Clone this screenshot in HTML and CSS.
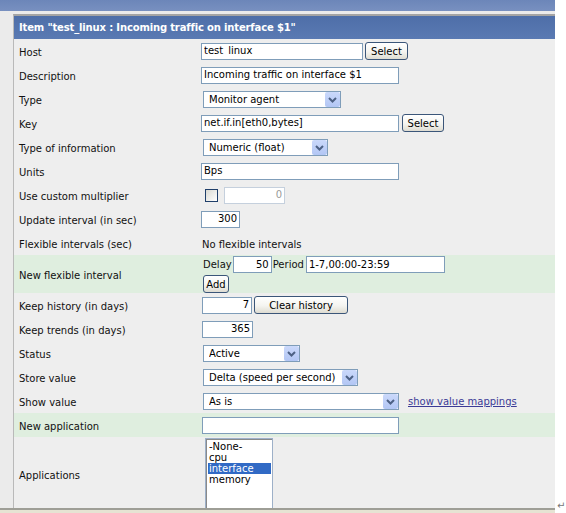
FILE: index.html
```html
<!DOCTYPE html>
<html>
<head>
<meta charset="utf-8">
<link rel="stylesheet" href="styles.css">
</head>
<body>
<div class="shot">
  <div class="page">
    <div class="topbar"></div>
    <div class="main">
      <div class="form">
        <div class="title">Item "test_linux : Incoming traffic on interface $1"</div>

        <div class="row">
          <div class="lbl">Host</div>
          <div class="val"><input class="txt w162" value="test_linux"><button class="btn w43 ml2">Select</button></div>
        </div>
        <div class="row">
          <div class="lbl">Description</div>
          <div class="val"><input class="txt w198" value="Incoming traffic on interface $1"></div>
        </div>
        <div class="row">
          <div class="lbl">Type</div>
          <div class="val"><div class="sel w138"><span class="sel-text">Monitor agent</span><span class="arr"><svg width="15" height="15" viewBox="0 0 15 15"><path d="M4 6 L7.5 9.5 L11 6" fill="none" stroke="#4d6185" stroke-width="2"/></svg></span></div></div>
        </div>
        <div class="row">
          <div class="lbl">Key</div>
          <div class="val"><input class="txt w198" value="net.if.in[eth0,bytes]"><button class="btn w42 ml3">Select</button></div>
        </div>
        <div class="row">
          <div class="lbl">Type of information</div>
          <div class="val"><div class="sel w125"><span class="sel-text">Numeric (float)</span><span class="arr"><svg width="15" height="15" viewBox="0 0 15 15"><path d="M4 6 L7.5 9.5 L11 6" fill="none" stroke="#4d6185" stroke-width="2"/></svg></span></div></div>
        </div>
        <div class="row">
          <div class="lbl">Units</div>
          <div class="val"><input class="txt w198" value="Bps"></div>
        </div>
        <div class="row">
          <div class="lbl">Use custom multiplier</div>
          <div class="val"><span class="chk"></span><input class="txt num dis w61" value="0" disabled></div>
        </div>
        <div class="row">
          <div class="lbl">Update interval (in sec)</div>
          <div class="val"><input class="txt num w39" value="300"></div>
        </div>
        <div class="row">
          <div class="lbl">Flexible intervals (sec)</div>
          <div class="val plain">No flexible intervals</div>
        </div>
        <div class="row green tall">
          <div class="lbl">New flexible interval</div>
          <div class="val flex">
            <div class="line"><span>Delay</span><input class="txt num w39 mx1" value="50"><span>Period</span><input class="txt w139 ml2" value="1-7,00:00-23:59"></div>
            <div class="line"><button class="btn w26">Add</button></div>
          </div>
        </div>
        <div class="row">
          <div class="lbl">Keep history (in days)</div>
          <div class="val"><input class="txt num w50 ml1" value="7"><button class="btn w94 ml2">Clear history</button></div>
        </div>
        <div class="row">
          <div class="lbl">Keep trends (in days)</div>
          <div class="val"><input class="txt num w51 ml1" value="365"></div>
        </div>
        <div class="row">
          <div class="lbl">Status</div>
          <div class="val"><div class="sel w97"><span class="sel-text">Active</span><span class="arr"><svg width="15" height="15" viewBox="0 0 15 15"><path d="M4 6 L7.5 9.5 L11 6" fill="none" stroke="#4d6185" stroke-width="2"/></svg></span></div></div>
        </div>
        <div class="row">
          <div class="lbl">Store value</div>
          <div class="val"><div class="sel w155"><span class="sel-text">Delta (speed per second)</span><span class="arr"><svg width="15" height="15" viewBox="0 0 15 15"><path d="M4 6 L7.5 9.5 L11 6" fill="none" stroke="#4d6185" stroke-width="2"/></svg></span></div></div>
        </div>
        <div class="row">
          <div class="lbl">Show value</div>
          <div class="val"><div class="sel w196"><span class="sel-text">As is</span><span class="arr"><svg width="15" height="15" viewBox="0 0 15 15"><path d="M4 6 L7.5 9.5 L11 6" fill="none" stroke="#4d6185" stroke-width="2"/></svg></span></div><a class="link" href="#">show value mappings</a></div>
        </div>
        <div class="row green">
          <div class="lbl">New application</div>
          <div class="val"><input class="txt w197 ml1" value=""></div>
        </div>
        <div class="row apps">
          <div class="lbl">Applications</div>
          <div class="val top">
            <div class="list">
              <div class="opt">-None-</div>
              <div class="opt">cpu</div>
              <div class="opt on">interface</div>
              <div class="opt">memory</div>
            </div>
          </div>
        </div>
      </div>
    </div>
    <div class="statusbar"></div>
  </div>
  <div class="mark">↵</div>
</div>
</body>
</html>
```

FILE: styles.css
```css
* { box-sizing: border-box; }
html, body { margin: 0; padding: 0; background: #fff; }
body {
  font-family: "DejaVu Sans", Verdana, sans-serif;
  font-size: 10px;
  color: #111;
}
.shot { display: flex; width: 566px; height: 513px; overflow: hidden; }
.page { width: 555px; height: 513px; flex: none; display: flex; flex-direction: column; }
.topbar { height: 11px; flex: none; background: linear-gradient(#6c86b9, #7890c0); }
.main { flex: 1; min-height: 0; overflow: hidden; background: #ebebeb; padding-top: 3px; }
.form {
  margin-left: 13px;
  border-left: 1px solid #b9b9b9;
  border-top: 2px solid #a4a4a4;
  background: #eeeeee;
  min-height: 100%;
}
.title {
  height: 23px;
  line-height: 23px;
  padding-left: 5px;
  background: linear-gradient(#4e6ea8, #5a7ab3);
  color: #fff;
  font-weight: bold;
  letter-spacing: -0.15px;
  white-space: nowrap;
}
.row {
  display: grid;
  grid-template-columns: 187px 1fr;
  align-items: center;
  height: 24px;
}
.row.green { background: #dfeedf; }
.row.tall { height: 38px; }
.row.apps { height: 74px; }
.lbl { padding-left: 5px; padding-top: 2px; white-space: nowrap; }
.val { display: flex; align-items: center; white-space: nowrap; }
.val.plain { padding-left: 1px; padding-top: 2px; }
.val.top { align-self: start; }
.val.flex { flex-direction: column; align-items: flex-start; align-self: start; padding-top: 1px; padding-left: 2px; gap: 2px; }
.line { display: flex; align-items: center; }

.txt {
  height: 17px;
  border: 1px solid #7f9db9;
  background: #fff;
  font: inherit;
  line-height: 14px;
  color: #000;
  padding: 0 2px 1px;
  margin: 0;
  outline: none;
}
.txt.num { text-align: right; }
.txt.dis { border-color: #c5d0dd; color: #9a9a9a; background: #fff; }

.btn {
  height: 18px;
  margin: 0;
  padding: 0;
  font: inherit;
  color: #000;
  border: 1px solid #3b5679;
  border-radius: 3px;
  background: linear-gradient(#ffffff 0%, #f4f4f0 55%, #dedcd2 100%);
}

.sel {
  height: 17px;
  margin-left: 2px;
  border: 1px solid #7f9db9;
  background: #fff;
  display: flex;
  align-items: center;
  padding-left: 5px;
  color: #000;
}
.sel-text { flex: 1; overflow: hidden; }
.arr {
  width: 15px;
  height: 15px;
  flex: none;
  border-radius: 2px;
  background: linear-gradient(#cbd9fb, #b2c6f4);
  display: flex;
}

.chk {
  width: 13px;
  height: 13px;
  margin-left: 4px;
  margin-right: 6px;
  border: 1px solid #1f3f6a;
  background: linear-gradient(135deg, #d9d9d2, #ffffff);
}

.link { margin-left: 9px; color: #3b3b96; text-decoration: underline; }

.list {
  margin-top: 1px;
  margin-left: 4px;
  width: 68px;
  height: 72px;
  border: 1px solid #9db0c8;
  box-shadow: inset 1px 1px 0 #8a8a8a;
  background: #fff;
  padding: 2px 1px 0 2px;
  color: #000;
}
.opt { height: 11px; line-height: 12px; padding-left: 1px; }
.opt.on { background: #316ac5; color: #fff; }

.statusbar {
  height: 5px;
  flex: none;
  border-top: 2px solid #9e9e96;
  background: #e6e3d3;
}
.mark { align-self: flex-end; margin: 0 0 2px 2px; font-size: 10px; line-height: 10px; color: #777; }

.w26 { width: 26px; }
.w39 { width: 39px; }
.w42 { width: 42px; }
.w43 { width: 43px; }
.w50 { width: 50px; }
.w51 { width: 51px; }
.w61 { width: 61px; }
.w94 { width: 94px; }
.w97 { width: 97px; }
.w125 { width: 125px; }
.w138 { width: 138px; }
.w139 { width: 139px; }
.w155 { width: 155px; }
.w162 { width: 162px; }
.w196 { width: 196px; }
.w197 { width: 197px; }
.w198 { width: 198px; }
.ml1 { margin-left: 1px; }
.ml2 { margin-left: 2px; }
.ml3 { margin-left: 3px; }
.mx1 { margin: 0 1px; }
```
